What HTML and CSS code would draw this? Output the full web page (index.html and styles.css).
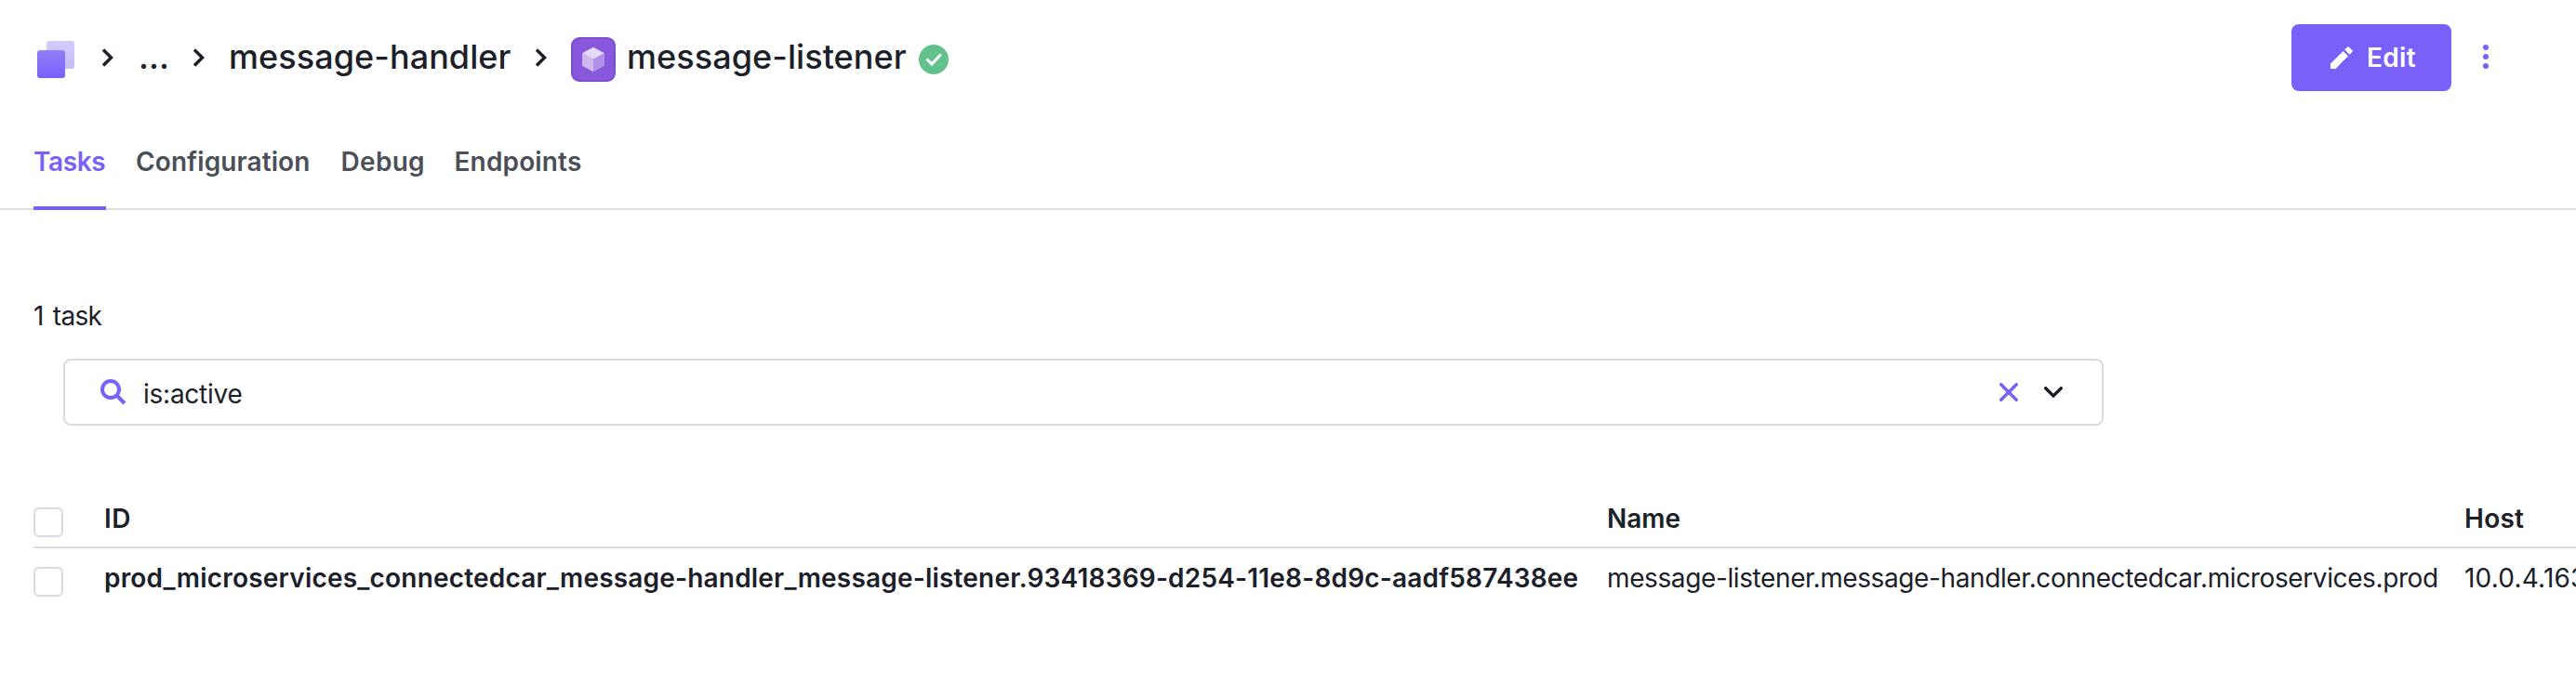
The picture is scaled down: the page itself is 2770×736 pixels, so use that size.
FILE: index.html
```html
<!DOCTYPE html>
<html lang="en">
<head>
<meta charset="utf-8">
<title>message-listener</title>
<link rel="stylesheet" href="styles.css">
</head>
<body>
<header class="header">
  <nav class="breadcrumb">
    <svg class="logo" width="48" height="48" viewBox="0 0 48 48">
      <defs>
        <linearGradient id="front" x1="0" y1="0" x2="0" y2="1"><stop offset="0" stop-color="#917ef7"/><stop offset="1" stop-color="#7860f8"/></linearGradient>
        <linearGradient id="back" x1="0" y1="0" x2="0" y2="1"><stop offset="0" stop-color="#d3cbfc"/><stop offset="1" stop-color="#c8bdfa"/></linearGradient>
      </defs>
      <rect x="14" y="4" width="30" height="30" rx="3" fill="url(#back)"/>
      <rect x="4" y="14" width="30" height="30" rx="3" fill="url(#front)"/>
    </svg>
    <svg class="sep sep-first" width="14" height="22" viewBox="0 0 14 22"><path d="M2 2.500 10.500 11 2 19.500"/></svg>
    <span class="crumb crumb-more">...</span>
    <svg class="sep sep-second" width="14" height="22" viewBox="0 0 14 22"><path d="M2 2.500 10.500 11 2 19.500"/></svg>
    <span class="crumb crumb-parent">message-handler</span>
    <svg class="sep sep-third" width="14" height="22" viewBox="0 0 14 22"><path d="M2 2.500 10.500 11 2 19.500"/></svg>
    <svg class="service" width="48" height="48" viewBox="0 0 48 48">
      <rect x="1" y="1" width="46" height="46" rx="8" fill="#8758dc" stroke="#7b4fc9" stroke-width="2"/>
      <path d="M24 10.700 36 17.200 24 23.700 12 17.200z" fill="#e5daf7"/>
      <path d="M12 17.200 24 23.700V37.300L12 30.800z" fill="#cdb9ef"/>
      <path d="M36 17.200 24 23.700V37.300L36 30.800z" fill="#b191e7"/>
    </svg>
    <span class="crumb crumb-current">message-listener</span>
    <svg class="status" width="32" height="32" viewBox="0 0 32 32"><circle cx="16" cy="16" r="16" fill="#63c28c"/><path d="M8.500 15.500 14 21 23.800 10.500" fill="none" stroke="#fff" stroke-width="3"/></svg>
  </nav>
  <div class="actions">
    <button class="edit">
      <svg width="24" height="24" viewBox="0 0 24 24" fill="#fff"><path d="M0 24V18.500L13.700 5 19 10.300 5.500 24zM15.300 3.500 18.200.6Q19 0 19.800.6L23.500 4.200Q24.300 5 23.500 5.800L20.600 8.700z"/></svg>
      <span>Edit</span>
    </button>
    <svg class="kebab" width="6" height="26" viewBox="0 0 6 26" fill="#7860f8"><circle cx="3" cy="3" r="3"/><circle cx="3" cy="13" r="3"/><circle cx="3" cy="23" r="3"/></svg>
  </div>
</header>
<nav class="tabs">
  <a class="tab tab-active">Tasks</a>
  <a class="tab tab-configuration">Configuration</a>
  <a class="tab tab-debug">Debug</a>
  <a class="tab tab-endpoints">Endpoints</a>
</nav>
<main class="content">
  <p class="count">1 task</p>
  <div class="search">
    <svg width="28" height="28" viewBox="0 0 28 28" fill="none" stroke="#7860f8" stroke-width="4"><circle cx="11" cy="11" r="9"/><path d="M17 17 26 26"/></svg>
    <span class="query">is:active</span>
    <svg class="clear" width="20" height="20" viewBox="0 0 20 20" fill="none" stroke="#7860f8" stroke-width="3.400" stroke-linecap="round"><path d="M1.700 1.700 18.300 18.300M18.300 1.700 1.700 18.300"/></svg>
    <svg width="20" height="12" viewBox="0 0 20 12" fill="none" stroke="#1b2029" stroke-width="3.400" stroke-linecap="round"><path d="M1.700 1.700 10 10 18.300 1.700"/></svg>
  </div>
  <div class="table">
    <div class="row head">
      <i class="check"></i>
      <b class="id">ID</b>
      <b class="name">Name</b>
      <b class="host">Host</b>
    </div>
    <div class="row task">
      <i class="check"></i>
      <b class="id">prod_microservices_connectedcar_message-handler_message-listener.93418369-d254-11e8-8d9c-aadf587438ee</b>
      <span class="name">message-listener.message-handler.connectedcar.microservices.prod</span>
      <span class="host">10.0.4.163</span>
    </div>
  </div>
</main>
</body>
</html>
```
FILE: styles.css
```css
* { box-sizing: border-box; }
body {
  margin: 0;
  width: 2770px;
  height: 736px;
  overflow: hidden;
  background: #fff;
  color: #1b2029;
  font: 400 28px/40px Inter, sans-serif;
}
svg { display: block; flex: none; }
.header {
  display: flex;
  justify-content: space-between;
  height: 124px;
  padding: 0 94px 0 36px;
}
.breadcrumb { display: flex; align-items: flex-start; }
.logo { margin-top: 40px; }
.sep { margin-top: 51px; fill: none; stroke: #1b2029; stroke-width: 3.5; }
.sep-first { margin-left: 25px; }
.sep-second { margin-left: 24px; }
.sep-third { margin-left: 26px; }
.crumb {
  flex: none;
  margin-top: 39px;
  font-size: 36px;
  line-height: 44px;
  font-weight: 500;
  letter-spacing: 0.06px;
  white-space: nowrap;
}
.crumb-more { margin-left: 26px; width: 34px; }
.crumb-parent { margin-left: 25px; width: 303px; }
.service { margin: 40px 12px 0 25px; }
.crumb-current { width: 302px; }
.status { margin: 48px 0 0 12px; }
.actions { display: flex; }
.edit {
  display: flex;
  align-items: center;
  gap: 15px;
  width: 172px;
  height: 72px;
  margin-top: 26px;
  padding: 0 0 0 42px;
  border: 0;
  border-radius: 8px;
  background: #7860f8;
  color: #fff;
  font: 600 28px/40px Inter, sans-serif;
  letter-spacing: 0.3px;
}
.kebab { margin: 48px 0 0 34px; }
.tabs {
  display: flex;
  height: 102px;
  padding-left: 36px;
  border-bottom: 2px solid #dedede;
}
.tab {
  height: 102px;
  margin-right: 32px;
  padding-top: 30px;
  color: #4b4f57;
  font-weight: 600;
  white-space: nowrap;
}
.tab-active {
  width: 78px;
  color: #7860f8;
  border-bottom: 4px solid #7860f8;
  letter-spacing: -0.4px;
}
.tab-configuration { width: 188.5px; letter-spacing: 0.1px; }
.tab-debug { width: 90px; letter-spacing: 0.3px; }
.tab-endpoints { letter-spacing: 0.15px; }
.content { padding-left: 36px; }
.count {
  margin: 0;
  padding-top: 94px;
  height: 160px;
  letter-spacing: -0.7px;
  word-spacing: 3px;
}
.search {
  display: flex;
  align-items: center;
  width: 2194px;
  height: 72px;
  margin-left: 32px;
  padding: 0 42px 0 38px;
  border: 2px solid #dadae2;
  border-radius: 8px;
}
.query { margin-left: 18px; padding-top: 4px; letter-spacing: -0.25px; }
.clear { margin: 0 28px 0 auto; }
.table { margin-top: 66px; width: 2734px; }
.row { display: flex; height: 66px; white-space: nowrap; overflow: hidden; }
.row b { font-weight: 600; }
.head { padding-top: 14px; border-bottom: 2px solid #dadae2; }
.head .id { letter-spacing: 0.6px; }
.head .host { letter-spacing: 0.25px; }
.task { padding-top: 12px; }
.check {
  flex: none;
  width: 32px;
  height: 32px;
  margin: 8px 44px 0 0;
  border: 2px solid #dadae2;
  border-radius: 6px;
}
.id { flex: none; width: 1616px; }
.name { flex: none; width: 922px; }
.host { flex: none; }
.task .id { letter-spacing: 0.19px; }
.task .name { letter-spacing: -0.39px; }
.task .host { letter-spacing: 0.2px; }
```
